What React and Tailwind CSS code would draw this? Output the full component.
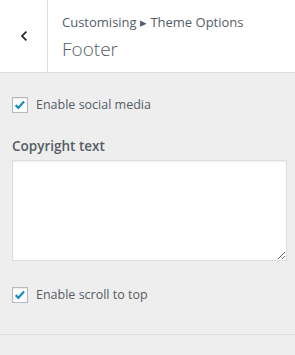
function Check({ label }) {
  return (
    <label className="flex items-center gap-[8px] text-[12.5px] text-[#555d66]">
      <span className="flex h-[16px] w-[16px] items-center justify-center border border-[#b4b9be] bg-white shadow-[inset_0_1px_2px_rgba(0,0,0,0.1)]">
        <svg viewBox="0 0 20 20" className="h-[16px] w-[16px]">
          <path d="M3.8 10.2l3.8 3.9 8.2-9" fill="none" stroke="#1e8cbe" strokeWidth="3.2" />
        </svg>
      </span>
      {label}
    </label>
  );
}

export default function App() {
  return (
    <div className="h-[355px] w-[295px] bg-[#eeeeee] font-['Open_Sans',sans-serif]">
      <div className="flex h-[73px] border-b border-[#dddddd] bg-white">
        <button className="flex w-[48px] items-center justify-center border-r border-[#dddddd] text-[#23282d]">
          <svg viewBox="0 0 10 14" className="h-[12px] w-[8px]">
            <path d="M8 1.5 2.5 7 8 12.5" fill="none" stroke="currentColor" strokeWidth="2.2" />
          </svg>
        </button>
        <div className="flex flex-col pl-[14px] pt-[12px] text-[#555d66]">
          <span className="text-[13px] leading-[20px]">Customising ▸ Theme Options</span>
          <span className="mt-[4px] text-[19px] font-light leading-[26px]">Footer</span>
        </div>
      </div>
      <div className="px-[12px] pt-[23px]">
        <Check label="Enable social media" />
        <div className="mt-[21px] text-[13.5px] font-semibold text-[#555d66]">Copyright text</div>
        <textarea className="mt-[4px] block h-[101px] w-[275px] border border-[#dddddd] bg-white shadow-[inset_0_1px_2px_rgba(0,0,0,0.07)]" />
        <div className="mt-[25px]">
          <Check label="Enable scroll to top" />
        </div>
      </div>
      <div className="mt-[29px] border-t border-[#dddddd]" />
    </div>
  );
}
